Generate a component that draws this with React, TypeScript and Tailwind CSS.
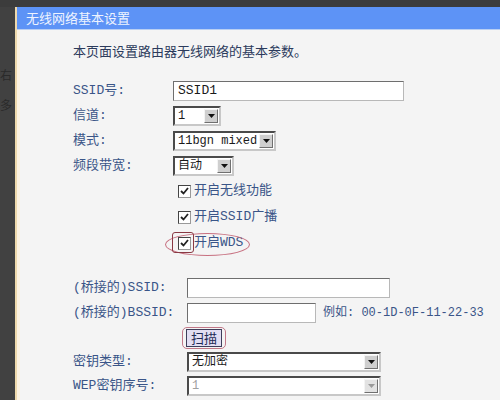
import React from "react";

const FONT = { fontFamily: '"Liberation Mono", "Noto Sans CJK SC", monospace' };
const CJK = { fontFamily: '"Noto Sans CJK SC", "Liberation Sans", sans-serif' };

function Arrow({ disabled }: { disabled?: boolean }) {
  return (
    <div
      className={`flex h-full w-[14px] items-center justify-center border border-t-[#f4f4f4] border-l-[#f4f4f4] border-b-[#707070] border-r-[#707070] ${
        disabled ? "bg-[#e2e2e2]" : "bg-[#cfcfcf]"
      }`}
    >
      <svg width="7" height="4" viewBox="0 0 7 4">
        <polygon points="0,0 7,0 3.5,4" fill={disabled ? "#9a9a9a" : "#111"} />
      </svg>
    </div>
  );
}

function Select({ value, width, disabled }: { value: string; width: string; disabled?: boolean }) {
  return (
    <div
      className={`flex h-[20px] items-stretch border-2 border-t-[#4a4a4a] border-l-[#4a4a4a] border-b-[#c8c8c8] border-r-[#c8c8c8] bg-white ${width}`}
    >
      <div
        className={`flex min-w-0 flex-1 items-center overflow-hidden whitespace-nowrap pl-[3px] text-[12px] ${
          disabled ? "text-[#a0a0a0]" : "text-[#1a1a1a]"
        }`}
        style={FONT}
      >
        {value}
      </div>
      <div className="py-px pr-px">
        <Arrow disabled={disabled} />
      </div>
    </div>
  );
}

function Input({ width }: { width: string }) {
  return (
    <div
      className={`h-[20px] border border-t-[#6e6e6e] border-l-[#6e6e6e] border-b-[#b8b8b8] border-r-[#b8b8b8] bg-white ${width}`}
    />
  );
}

function Check() {
  return (
    <div className="flex h-[13px] w-[13px] items-center justify-center border border-t-[#444] border-l-[#444] border-b-[#999] border-r-[#999] bg-white">
      <svg width="9" height="8" viewBox="0 0 9 8">
        <polyline points="1,4 3.5,6.5 8,1" fill="none" stroke="#222" strokeWidth="1.8" />
      </svg>
    </div>
  );
}

export default function App() {
  const label = "text-[13px] text-[#3a5588] whitespace-nowrap";
  return (
    <div className="flex h-[400px] w-[500px] flex-col overflow-hidden bg-[#404040]" style={FONT}>
      <div className="h-[7px] shrink-0 bg-[#3c3c3c]" />
      <div className="flex flex-1">
        <div
          className="flex w-[15px] shrink-0 flex-col items-start overflow-hidden bg-[#414141] pt-[60px] text-[12px] text-[#2a2a2a]"
          style={CJK}
        >
          <div className="leading-[16px]">右</div>
          <div className="mt-[14px] leading-[16px]">多</div>
        </div>
        <div className="flex flex-1 flex-col border-l-2 border-[#efd9ac]">
          <div
            className="flex h-[22px] shrink-0 items-center bg-[#5d93f6] pl-[9px] text-[13px] text-[#eef3ff]"
            style={CJK}
          >
            无线网络基本设置
          </div>
          <div className="h-px bg-[#b9cff3]" />
          <div className="flex flex-1 flex-col border-l-[3px] border-[#fbf2e2] bg-[#f4f4f4] pl-[53px]">
            <div className="mt-[13px] h-[16px] text-[13px] leading-[16px] text-[#2c3b5c]" style={CJK}>
              本页面设置路由器无线网络的基本参数。
            </div>
            <div className="h-[19px]" />
            <div className="flex h-[25px] items-center">
              <div className={`w-[100px] ${label}`}>SSID号:</div>
              <div className="flex h-[20px] w-[231px] items-center border border-t-[#6e6e6e] border-l-[#6e6e6e] border-b-[#b8b8b8] border-r-[#b8b8b8] bg-white pl-[4px] text-[13px] text-[#1a1a1a]">
                SSID1
              </div>
            </div>
            <div className="flex h-[25px] items-center">
              <div className={`w-[100px] ${label}`}>信道:</div>
              <Select value="1" width="w-[48px]" />
            </div>
            <div className="flex h-[25px] items-center">
              <div className={`w-[100px] ${label}`}>模式:</div>
              <Select value="11bgn mixed" width="w-[103px]" />
            </div>
            <div className="flex h-[25px] items-center">
              <div className={`w-[100px] ${label}`}>频段带宽:</div>
              <Select value="自动" width="w-[61px]" />
            </div>
            {["开启无线功能", "开启SSID广播", "开启WDS"].map((t, i) => (
              <div key={t} className="relative flex h-[26px] items-center pl-[105px]">
                <Check />
                <span className={`ml-[3px] ${label}`}>{t}</span>
                {i === 2 && (
                  <>
                    <div className="absolute left-[92px] top-[3px] h-[23px] w-[85px] rounded-[50%] border border-[#c77080]" />
                    <div className="absolute left-[99px] top-[2px] h-[21px] w-[22px] rounded-[3px] border border-[#8a3a44]" />
                  </>
                )}
              </div>
            ))}
            <div className="h-[19px]" />
            <div className="flex h-[25px] items-center">
              <div className={`w-[114px] ${label}`}>(桥接的)SSID:</div>
              <Input width="w-[203px]" />
            </div>
            <div className="flex h-[26px] items-center">
              <div className={`w-[114px] ${label}`}>(桥接的)BSSID:</div>
              <Input width="w-[129px]" />
              <span className="ml-[7px] whitespace-nowrap text-[12px] text-[#3a5588]">例如: 00-1D-0F-11-22-33</span>
            </div>
            <div className="flex h-[24px] items-center pl-[109px]">
              <div className="flex h-[22px] w-[44px] items-center justify-center rounded-[5px] border border-[#c27888]">
                <div
                  className="flex h-[18px] w-[36px] items-center justify-center border border-[#3e3e5a] bg-[#e2def2] text-[13px] text-[#1e2a55]"
                  style={CJK}
                >
                  扫描
                </div>
              </div>
            </div>
            <div className="flex h-[24px] items-center">
              <div className={`w-[114px] ${label}`}>密钥类型:</div>
              <Select value="无加密" width="w-[194px]" />
            </div>
            <div className="flex h-[24px] items-center">
              <div className={`w-[114px] ${label}`}>WEP密钥序号:</div>
              <Select value="1" width="w-[194px]" disabled />
            </div>
          </div>
        </div>
      </div>
    </div>
  );
}
